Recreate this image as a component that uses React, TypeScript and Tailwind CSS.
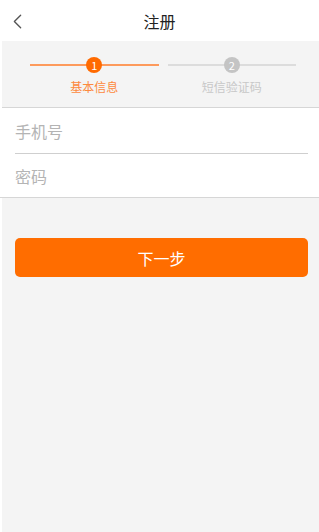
import React from 'react';
import { ChevronLeft } from 'lucide-react';

const font = { fontFamily: '"Noto Sans CJK SC", "Noto Sans", sans-serif' };

const Step = ({ n, label, active }: { n: number; label: string; active: boolean }) => (
  <div className="flex flex-1 flex-col items-center">
    <div className="relative flex h-[16px] w-full items-center justify-center">
      <div className={`absolute left-0 right-0 top-[7px] h-[2px] ${active ? 'bg-[#fd9a5c]' : 'bg-[#dcdcdc]'}`} />
      <div
        className={`relative flex h-[16px] w-[16px] items-center justify-center rounded-full text-[11px] leading-none text-white ${
          active ? 'bg-[#ff6a00]' : 'bg-[#c4c4c4]'
        }`}
      >
        {n}
      </div>
    </div>
    <div className={`mt-[6px] text-[12px] leading-[15px] ${active ? 'text-[#fd8a3e]' : 'text-[#c8c8c8]'}`}>{label}</div>
  </div>
);

export default function App() {
  return (
    <div className="flex h-[532px] w-[319px] flex-col bg-white" style={font}>
      <header className="relative flex h-[41px] shrink-0 items-center justify-center bg-white">
        <ChevronLeft className="absolute left-[5px] top-[9px] h-[25px] w-[25px] text-[#555]" strokeWidth={1.3} />
        <h1 className="text-[16px] text-[#222]">注册</h1>
      </header>
      <div className="ml-[2px] flex flex-1 flex-col bg-[#f4f4f4]">
        <div className="flex h-[67px] shrink-0 gap-[9px] border-b border-[#d6d6d6] pl-[28px] pr-[23px] pt-[16px]">
          <Step n={1} label="基本信息" active />
          <Step n={2} label="短信验证码" active={false} />
        </div>
        <div className="-ml-[2px] bg-white">
          <div className="flex h-[45px] items-center px-[15px]">
            <input
              className="w-full bg-transparent text-[16px] text-[#333] outline-none placeholder:text-[#b4b4b4]"
              placeholder="手机号"
              style={font}
            />
          </div>
          <div className="ml-[15px] mr-[11px] h-px bg-[#cfcfcf]" />
          <div className="flex h-[44px] items-center border-b border-[#d6d6d6] px-[15px]">
            <input
              type="password"
              className="w-full bg-transparent text-[16px] text-[#333] outline-none placeholder:text-[#b4b4b4]"
              placeholder="密码"
              style={font}
            />
          </div>
        </div>
        <div className="pl-[13px] pr-[11px] pt-[40px]">
          <button className="flex h-[39px] w-full items-center justify-center rounded-[5px] bg-[#ff6d00] text-[16px] text-white">
            下一步
          </button>
        </div>
      </div>
    </div>
  );
}
